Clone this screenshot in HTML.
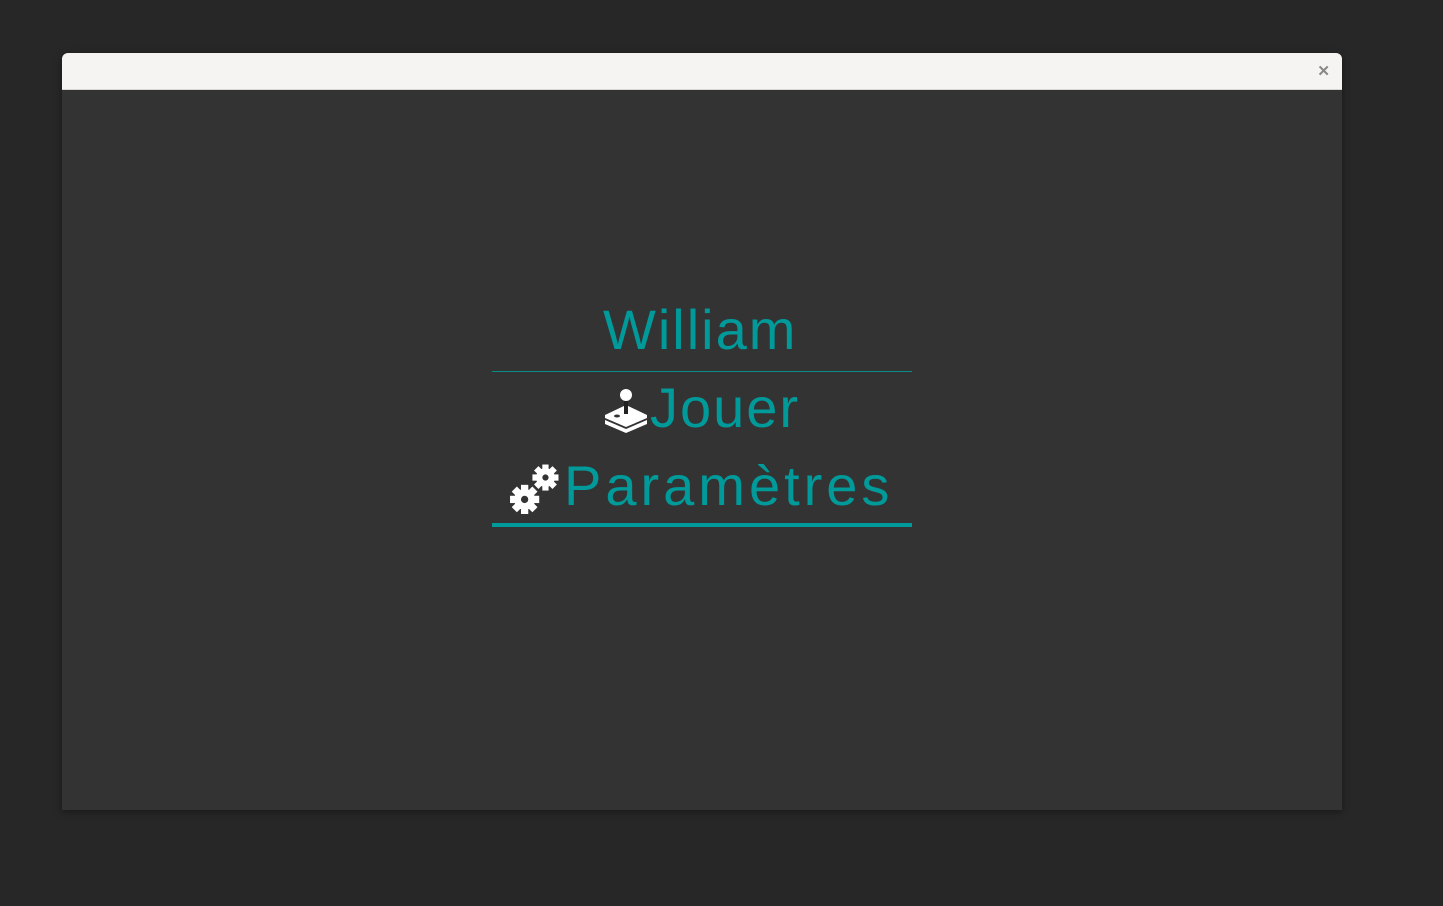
<!DOCTYPE html>
<html><head><meta charset="utf-8"><style>
html,body{margin:0;padding:0;width:1443px;height:906px;background:#272727;overflow:hidden;font-family:"Liberation Sans",sans-serif}
.win{position:absolute;left:62px;top:53px;width:1280px;height:757px;background:#333;box-shadow:0 2px 8px rgba(0,0,0,.4);border-radius:6px 6px 0 0;overflow:hidden}
.bar{height:36px;background:#f5f4f2;border-bottom:1px solid #d8d6d2;position:relative}
.x{position:absolute;right:12px;top:9px;color:#888;font-size:15px;font-weight:bold}
.t{position:absolute;color:#009a9a;font-size:56px;line-height:1;white-space:nowrap}
</style></head><body>
<div class="win"><div class="bar"><span class="x">✕</span></div></div>
<div class="t" style="left:603px;top:302px;letter-spacing:2px">William</div>
<div style="position:absolute;left:492px;top:371px;width:420px;height:1px;background:#0a8a8a"></div>
<svg style="position:absolute;left:603px;top:388px" width="46" height="46" viewBox="0 0 46 46">
<path d="M2 36 L23 45 L44 36 L44 32 L23 41 L2 32Z" fill="#fff"/>
<path d="M2 27 L23 17 L44 27 L44 30 L23 39 L2 30Z" fill="#fff"/>
<rect x="21" y="10" width="4" height="16" fill="#222"/>
<circle cx="23" cy="7" r="6" fill="#fff"/>
<ellipse cx="14" cy="28" rx="3" ry="1.5" fill="#333"/>
</svg>
<div class="t" style="left:650px;top:380px;letter-spacing:2px">Jouer</div>
<svg style="position:absolute;left:509px;top:464px" width="50" height="50" viewBox="0 0 48 48">
<g fill="#fff">
<circle cx="15" cy="34" r="10"/>
<g transform="translate(15 34)"><rect x="-3.5" y="-14" width="7" height="28"/><rect x="-3.5" y="-14" width="7" height="28" transform="rotate(45)"/><rect x="-3.5" y="-14" width="7" height="28" transform="rotate(90)"/><rect x="-3.5" y="-14" width="7" height="28" transform="rotate(135)"/></g>
<circle cx="35" cy="13" r="9"/>
<g transform="translate(35 13)"><rect x="-3" y="-12.5" width="6" height="25"/><rect x="-3" y="-12.5" width="6" height="25" transform="rotate(45)"/><rect x="-3" y="-12.5" width="6" height="25" transform="rotate(90)"/><rect x="-3" y="-12.5" width="6" height="25" transform="rotate(135)"/></g>
</g>
<circle cx="15" cy="34" r="3.5" fill="#333"/><circle cx="35" cy="13" r="3" fill="#333"/>
</svg>
<div class="t" style="left:564px;top:458px;letter-spacing:4px">Paramètres</div>
<div style="position:absolute;left:492px;top:523px;width:420px;height:4px;background:#009a9a"></div>
</body></html>
